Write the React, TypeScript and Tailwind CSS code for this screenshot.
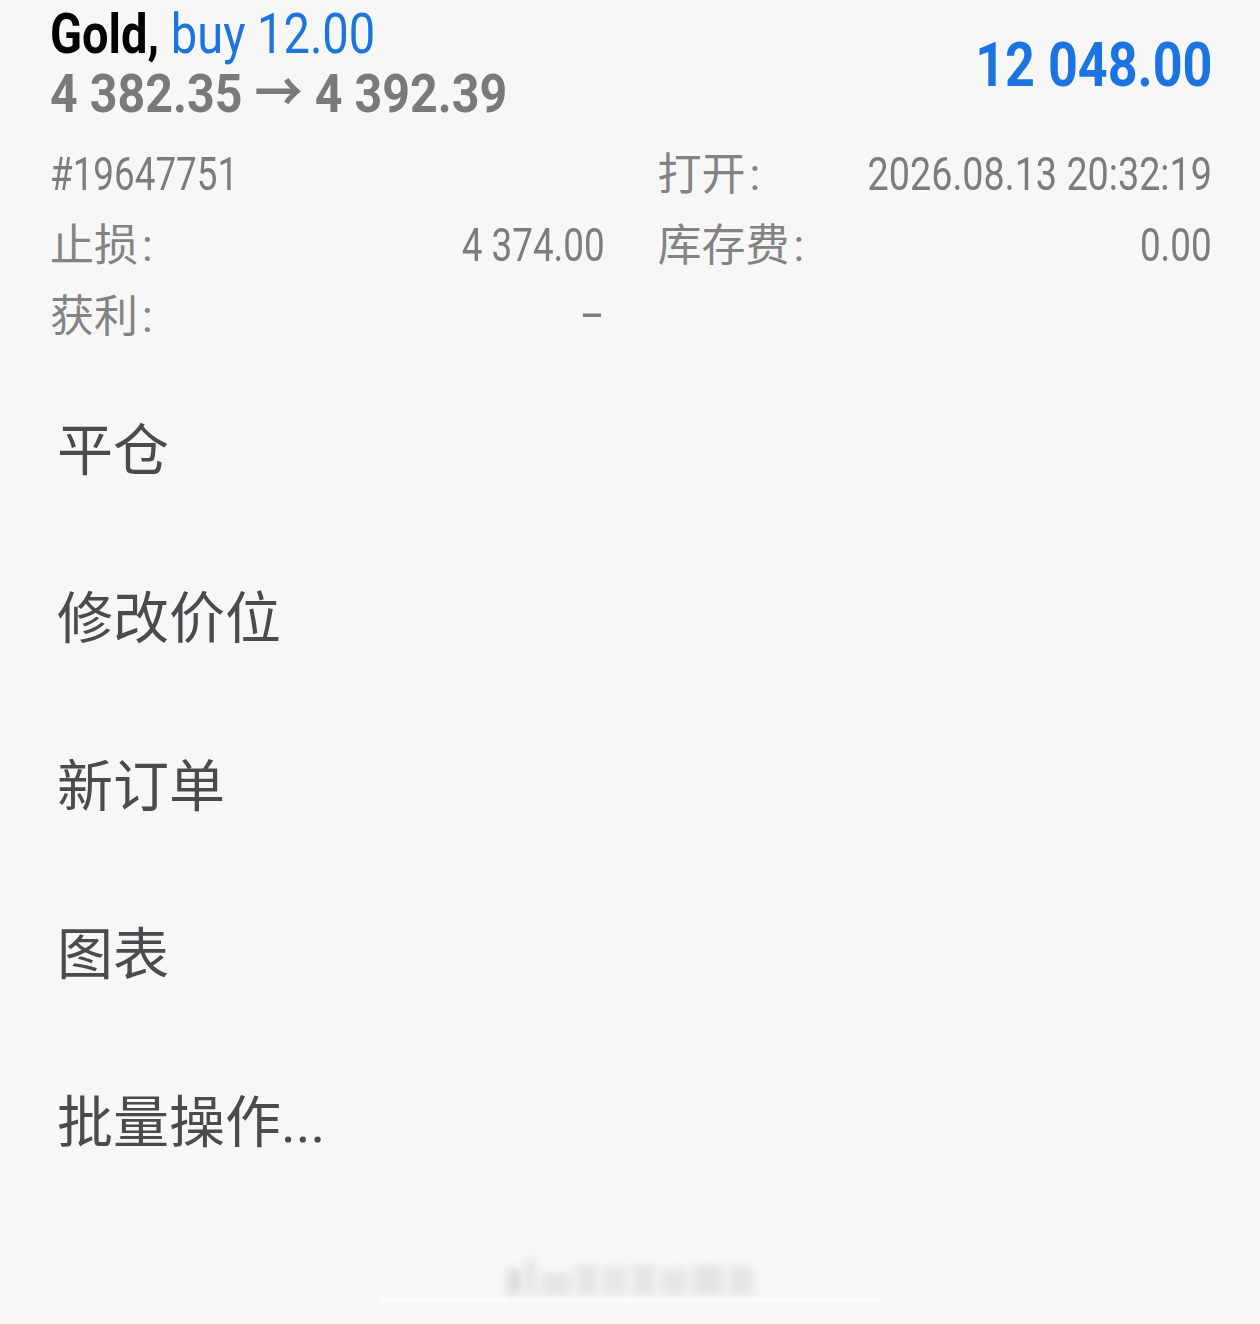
import React from "react";

const FONT = { fontFamily: '"Roboto", "Noto Sans CJK SC", sans-serif' };

// Roboto is the only sans we have, the screen uses a condensed face, so squeeze it
const Cond: React.FC<{ right?: boolean; className?: string; children: React.ReactNode }> = ({
  right,
  className = "",
  children,
}) => (
  <span
    className={`inline-block whitespace-nowrap ${
      right ? "origin-right" : "origin-left"
    } ${className}`}
  >
    {children}
  </span>
);

interface FieldProps {
  label?: string;
  value: string;
  wide?: boolean;
}

const Field: React.FC<FieldProps> = ({ label, value, wide }) => (
  <div className="flex items-baseline justify-between h-[71px] leading-[71px]">
    {label ? (
      <span className="text-[44px] text-[#838383]">
        {label}
        <span className="ml-[4px]">:</span>
      </span>
    ) : (
      <span />
    )}
    <Cond
      right
      className={`text-[46px] text-[#7c7c7c] ${wide ? "scale-x-[0.82]" : "scale-x-[0.8]"}`}
    >
      {value}
    </Cond>
  </div>
);

const menu = ["平仓", "修改价位", "新订单", "图表", "批量操作..."];

export default function App() {
  return (
    <div className="min-h-screen bg-[#f7f7f7] overflow-hidden" style={FONT}>
      {/* HEADER */}
      <div className="flex justify-between pl-[50px] pr-[48px] pt-[4px]">
        <div className="flex flex-col">
          <Cond className="text-[56px] leading-[60px] scale-x-[0.84]">
            <span className="font-bold text-black">Gold,</span>
            <span className="text-[#1b74e0]"> buy 12.00</span>
          </Cond>
          <Cond className="text-[54px] leading-[60px] font-bold text-[#7a7a7a] scale-x-[0.895]">
            4 382.35 → 4 392.39
          </Cond>
        </div>
        <div className="mt-[30px]">
          <Cond
            right
            className="text-[62px] leading-[62px] font-bold text-[#1b74e0] scale-x-[0.84]"
          >
            12 048.00
          </Cond>
        </div>
      </div>

      {/* DETAILS */}
      <div className="grid grid-cols-2 gap-x-[53px] pl-[50px] pr-[48px] mt-[15px]">
        <div className="flex flex-col">
          <div className="flex items-baseline h-[71px] leading-[71px]">
            <Cond className="text-[46px] text-[#7c7c7c] scale-x-[0.8]">#19647751</Cond>
          </div>
          <Field label="止损" value="4 374.00" />
          <Field label="获利" value="–" />
        </div>
        <div className="flex flex-col">
          <Field label="打开" value="2026.08.13 20:32:19" wide />
          <Field label="库存费" value="0.00" />
        </div>
      </div>

      {/* ACTIONS */}
      <div className="flex flex-col mt-[15px]">
        {menu.map((item) => (
          <button
            key={item}
            className="flex items-center h-[168px] pl-[57px] text-left text-[56px] leading-none text-[#4a4a4f]"
          >
            {item}
          </button>
        ))}
      </div>

      {/* blurred watermark */}
      <div className="flex flex-col items-center mt-[48px]">
        <div className="flex items-end gap-[6px] h-[40px] blur-[4px] opacity-40">
          <div className="w-[14px] h-[26px] bg-[#b5b5b5]" />
          <div className="w-[8px] h-[36px] bg-[#c0c0c0]" />
          <div className="w-[30px] h-[22px] bg-[#cacaca]" />
          <div className="w-[20px] h-[30px] bg-[#c8c8c8]" />
          <div className="w-[24px] h-[28px] bg-[#cecece]" />
          <div className="w-[22px] h-[30px] bg-[#c8c8c8]" />
          <div className="w-[26px] h-[26px] bg-[#cccccc]" />
          <div className="w-[30px] h-[30px] bg-[#c7c7c7]" />
          <div className="w-[24px] h-[28px] bg-[#cacaca]" />
        </div>
        <div className="w-[500px] h-[6px] mt-[2px] bg-[#fbfbfb]" />
      </div>
    </div>
  );
}
